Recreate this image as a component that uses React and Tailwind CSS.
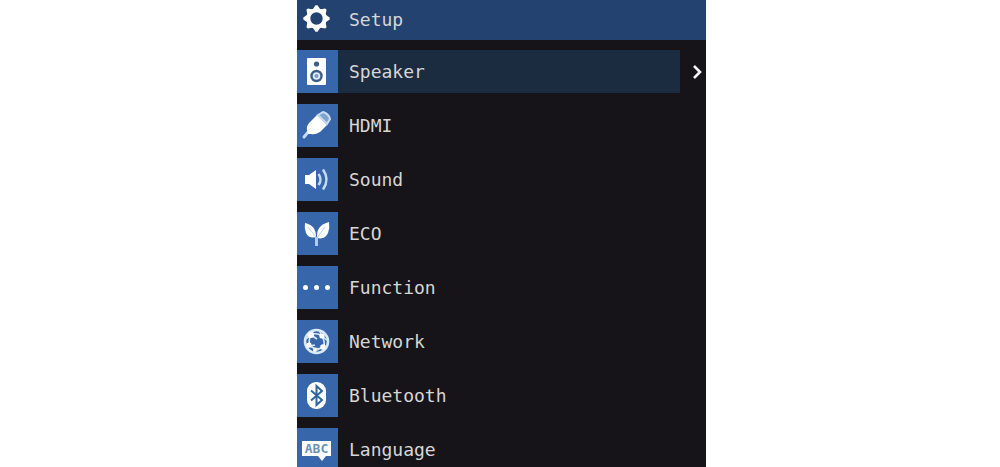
import React, { useState } from "react";

function GearIcon() {
  return (
    <svg viewBox="0 0 41 40" className="h-10 w-[41px] shrink-0" aria-hidden="true">
      <g transform="translate(19.5 18.5)">
        <circle r="8.2" fill="none" stroke="#fdfdfb" strokeWidth="4" />
        {[0, 45, 90, 135, 180, 225, 270, 315].map((angle) => (
          <path key={angle} d="M-4.2 -8.5 L-1 -13.2 H1 L4.2 -8.5 Z" fill="#fdfdfb" transform={`rotate(${angle})`} />
        ))}
      </g>
    </svg>
  );
}

const icons = {
  speaker: (
    <>
      <rect x="10" y="8" width="19" height="27" rx="1" fill="#fff" />
      <circle cx="19.5" cy="14" r="2.6" fill="#3a5c88" />
      <circle cx="19.5" cy="26" r="5" fill="#dfe9f4" stroke="#3a5c88" strokeWidth="2.4" />
      <circle cx="19.5" cy="26" r="2" fill="#7d9cc4" />
    </>
  ),
  hdmi: (
    <>
      <path d="M7 33 L12 27" stroke="#c3dcf5" strokeWidth="3" strokeLinecap="round" />
      <path d="M10 26 Q9 22 13 18 L20 11 L30 21 L23 28 Q18 31 14 30 L11 30 Z" fill="#fff" />
      <path d="M21 11 L26 8 Q32 10 33 15 L30 20 Z" fill="#7fa3d2" stroke="#c9dcf1" strokeWidth="2" />
    </>
  ),
  sound: (
    <>
      <path d="M8 17 H12 L19 12 V31 L12 26 H8 Z" fill="#fff" />
      <path d="M21.500 16 Q25.500 21.500 21.500 27" fill="none" stroke="#c5dbf2" strokeWidth="2.500" />
      <path d="M26 11.500 Q33 21.500 26 31.500" fill="none" stroke="#c5dbf2" strokeWidth="2.500" />
    </>
  ),
  eco: (
    <>
      <path d="M8 11 Q19 13 19 25 Q12 27 9 21 Q7 16 8 11 Z" fill="#fff" />
      <path d="M32 10 Q19 13 20 26 Q28 28 31 21 Q33 16 32 10 Z" fill="#fff" />
      <path d="M11 15 L19 25 M28 15 L20 26" stroke="#bcd3e9" strokeWidth="1" />
      <path d="M19.500 25 V34" stroke="#a8cfea" strokeWidth="3" />
    </>
  ),
  function: (
    <g fill="#fff">
      <circle cx="8.500" cy="21.500" r="2.500" />
      <circle cx="19.500" cy="21.500" r="2.500" />
      <circle cx="30.500" cy="21.500" r="2.500" />
    </g>
  ),
  network: (
    <g fill="none" stroke="#d8e8f7" strokeWidth="1.600">
      <circle cx="19.500" cy="21.500" r="11.500" strokeWidth="2.600" />
      <path d="M14 15 Q19 12 25 16 Q28 21 27 27 M14 15 Q11 20 13 26 Q20 31 27 27 M9 19 L14 15 L17 10 M22 10 L25 16 L31 21 M13 26 L10 28 M20 30 L27 27 M14 15 L20 19 M13 26 L18 25" />
      <g fill="#fff" stroke="none">
        <circle cx="14" cy="15" r="3" />
        <circle cx="25" cy="16" r="2.600" />
        <circle cx="12" cy="25" r="2.600" />
        <circle cx="26" cy="27" r="2.800" />
        <circle cx="18" cy="30" r="2" />
      </g>
    </g>
  ),
  bluetooth: (
    <>
      <rect x="10" y="8" width="19" height="27" rx="9" fill="#fff" />
      <path d="M14 16.500 L25 26 L19.500 31 V12 L25 17 L14 26.500" fill="none" stroke="#2d659f" strokeWidth="2" />
    </>
  ),
  language: (
    <>
      <path d="M5 13 H34 V28 H29 L25 33 L21 28 H5 Z" fill="#fff" />
      <text x="19.500" y="25" textAnchor="middle" fontSize="13" fontWeight="700" fontFamily="DejaVu Sans Mono, monospace" fill="#6a93b8">
        ABC
      </text>
    </>
  ),
};

const items = [
  { id: "speaker", label: "Speaker" },
  { id: "hdmi", label: "HDMI" },
  { id: "sound", label: "Sound" },
  { id: "eco", label: "ECO" },
  { id: "function", label: "Function" },
  { id: "network", label: "Network" },
  { id: "bluetooth", label: "Bluetooth" },
  { id: "language", label: "Language" },
];

function MenuItem({ item, active, onSelect }) {
  return (
    <li>
      <button
        type="button"
        onClick={onSelect}
        aria-current={active ? "true" : undefined}
        className="flex h-[43px] w-full items-stretch text-left"
      >
        <span className="w-[41px] shrink-0 bg-[#3866aa]">
          <svg viewBox="0 0 41 43" className="h-[43px] w-[41px]" aria-hidden="true">
            {icons[item.id]}
          </svg>
        </span>
        <span className={`flex flex-1 items-center pl-[11px] ${active ? "bg-[#1c2c40]" : ""}`}>{item.label}</span>
        <span className="flex w-[26px] shrink-0 items-center justify-center pl-[7px]">
          {active && (
            <svg viewBox="0 0 10 16" className="h-4 w-[10px]" aria-hidden="true">
              <path d="M2 2 L8 8 L2 14" fill="none" stroke="#f4f4f4" strokeWidth="2.600" />
            </svg>
          )}
        </span>
      </button>
    </li>
  );
}

export default function App() {
  const [selected, setSelected] = useState("speaker");

  return (
    <div className="grid h-screen grid-cols-[297fr_409fr_294fr] overflow-hidden bg-white">
      <main className="col-start-2 overflow-hidden bg-[#161418] font-['DejaVu_Sans_Mono',monospace] text-lg text-[#d6d6d6]">
        <header className="flex h-10 items-center bg-[#234270]">
          <GearIcon />
          <h1 className="pl-[11px]">Setup</h1>
        </header>
        <ul className="flex flex-col gap-[11px] pt-[10px]">
          {items.map((item) => (
            <MenuItem
              key={item.id}
              item={item}
              active={item.id === selected}
              onSelect={() => setSelected(item.id)}
            />
          ))}
        </ul>
      </main>
    </div>
  );
}
